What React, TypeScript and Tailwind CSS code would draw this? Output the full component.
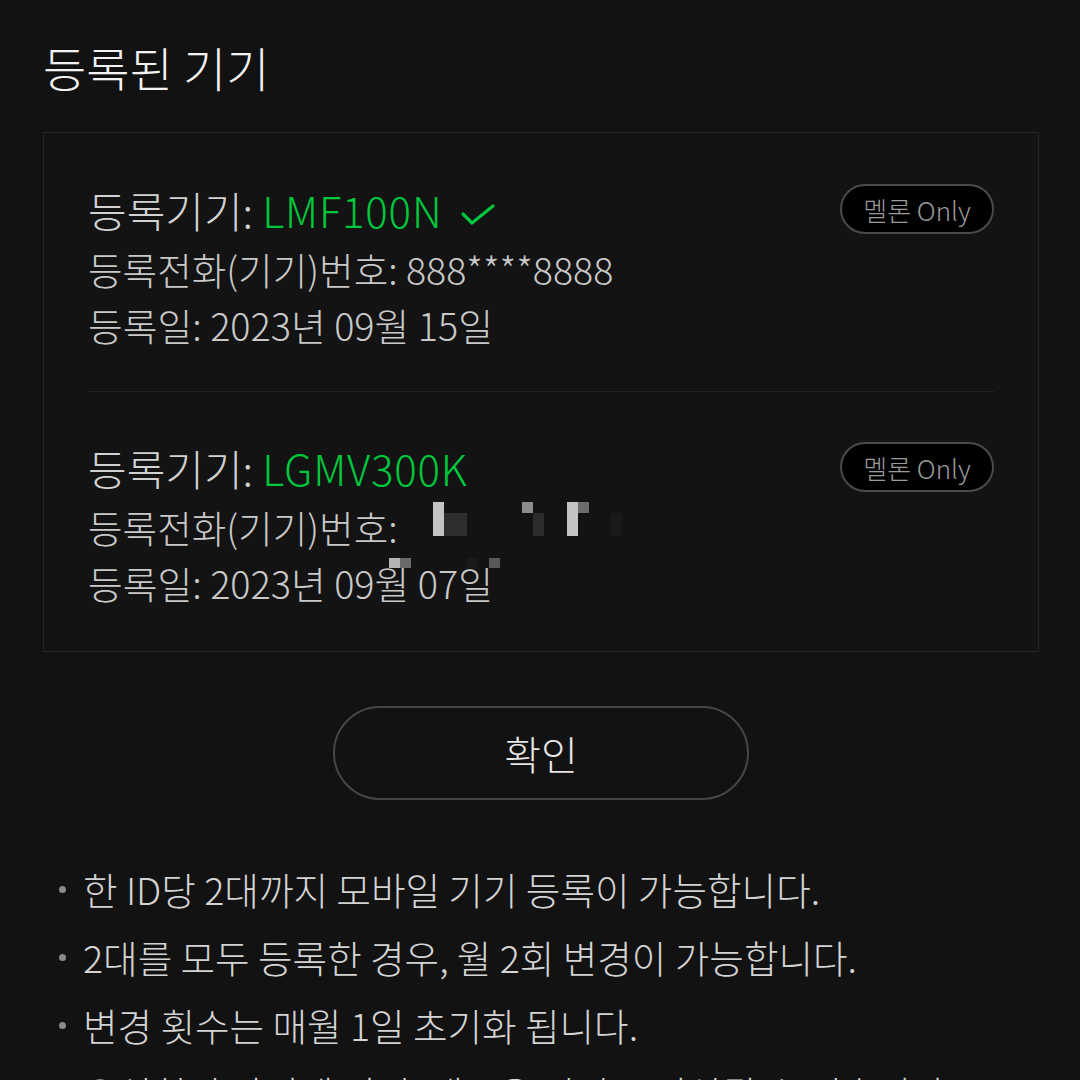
import { Fragment } from 'react'

interface Device {
  model: string
  phone: string
  date: string
  verified?: boolean
  masked?: boolean
}

const devices: Device[] = [
  { model: 'LMF100N', phone: '888****8888', date: '2023년 09월 15일', verified: true },
  { model: 'LGMV300K', phone: '', date: '2023년 09월 07일', masked: true },
]

const notes = [
  '한 ID당 2대까지 모바일 기기 등록이 가능합니다.',
  '2대를 모두 등록한 경우, 월 2회 변경이 가능합니다.',
  '변경 횟수는 매월 1일 초기화 됩니다.',
  '유심칩이 바뀌게 되면, 새로운 기기로 인식될 수 있습니다.',
]

function CheckIcon() {
  return (
    <svg width="36" height="26" viewBox="0 0 36 26" fill="none" className="ml-[18px] mt-[10px]">
      <path d="M3 13 L12 22 L33 5" stroke="#00c73c" strokeWidth="3.2" strokeLinecap="round" strokeLinejoin="round" />
    </svg>
  )
}

function MelonOnlyBadge() {
  return (
    <span className="flex h-[50px] w-[154px] items-center justify-center rounded-full border-2 border-[#4a4a4a] bg-black text-[26px] font-light text-[#9b9b9b]">
      멜론 Only
    </span>
  )
}

// pixelated redaction blocks from the source screenshot
function PhoneMask() {
  return (
    <span className="pointer-events-none absolute inset-0">
      <span className="absolute left-[345px] top-[4px] h-[34px] w-[11px] bg-[#c4c4c4]" />
      <span className="absolute left-[356px] top-[15px] h-[23px] w-[23px] bg-[#2e2e2e]" />
      <span className="absolute left-[434px] top-[4px] h-[11px] w-[11px] bg-[#8c8c8c]" />
      <span className="absolute left-[445px] top-[15px] h-[23px] w-[11px] bg-[#2c2c2c]" />
      <span className="absolute left-[479px] top-[4px] h-[34px] w-[11px] bg-[#c4c4c4]" />
      <span className="absolute left-[490px] top-[4px] h-[11px] w-[11px] bg-[#6c6c6c]" />
      <span className="absolute left-[523px] top-[15px] h-[23px] w-[11px] bg-[#1a1a1a]" />
    </span>
  )
}

function DateMask() {
  return (
    <span className="pointer-events-none absolute inset-0">
      <span className="absolute left-[301px] top-[2px] h-[10px] w-[11px] bg-[#b4b4b4]" />
      <span className="absolute left-[312px] top-[2px] h-[10px] w-[11px] bg-[#6a6a6a]" />
      <span className="absolute left-[379px] top-[2px] h-[10px] w-[11px] bg-[#1b1b1b]" />
      <span className="absolute left-[401px] top-[2px] h-[10px] w-[11px] bg-[#585858]" />
    </span>
  )
}

function DeviceItem({ device }: { device: Device }) {
  return (
    <div>
      <div className="flex h-[62px] items-center justify-between">
        <div className="flex items-center text-[42px] font-light text-[#d2d2d2]">
          <span>등록기기:&nbsp;</span>
          <span className="tracking-[0.8px] text-[#00c73c]">{device.model}</span>
          {device.verified && <CheckIcon />}
        </div>
        <MelonOnlyBadge />
      </div>
      <div className="relative flex h-[58px] items-center text-[37.6px] font-light text-[#c9c9c9]">
        <span>등록전화(기기)번호:&nbsp;</span>
        {device.masked ? <PhoneMask /> : <span>{device.phone}</span>}
      </div>
      <div className="relative flex h-[54px] items-center text-[37.8px] font-light text-[#c9c9c9]">
        <span>등록일: {device.date}</span>
        {device.masked && <DateMask />}
      </div>
    </div>
  )
}

export default function App() {
  return (
    <div
      className="min-h-screen overflow-hidden bg-[#121212] px-[43px] text-white"
      style={{ fontFamily: '"Noto Sans CJK KR", "Noto Sans", sans-serif', height: 1080 }}
    >
      {/* Title */}
      <div className="flex h-[132px] items-center">
        <h1 className="text-[47px] font-light leading-none text-[#f2f2f2]">등록된 기기</h1>
      </div>

      {/* Registered devices */}
      <div className="mr-[-2px] border border-[#262626] bg-[#131313] px-[44px] pb-[41px] pt-[45px]">
        {devices.map((d, i) => (
          <Fragment key={d.model}>
            {i > 0 && <div className="mb-[44px] mt-[39px] h-px bg-[#232323]" />}
            <DeviceItem device={d} />
          </Fragment>
        ))}
      </div>

      {/* Confirm */}
      <div className="mt-[54px] flex justify-center">
        <button className="ml-[2px] h-[94px] w-[416px] rounded-full border-2 border-[#464646] text-[40px] font-light text-[#e6e6e6]">
          확인
        </button>
      </div>

      {/* Notes */}
      <ul className="mt-[55px] pl-[16px]">
        {notes.map((n) => (
          <li key={n} className="flex h-[68px] items-center text-[37.6px] font-light text-[#d4d4d4]">
            <span className="mr-[17px] h-[7px] w-[7px] shrink-0 rounded-full bg-[#8a8a8a]" />
            <span className="whitespace-nowrap">{n}</span>
          </li>
        ))}
      </ul>
    </div>
  )
}
